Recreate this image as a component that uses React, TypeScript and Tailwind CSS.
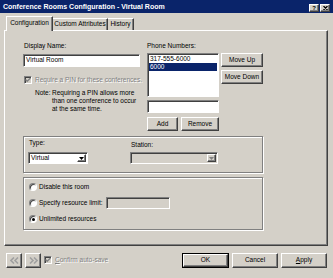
import React from 'react';

/**
 * Conference Rooms Configuration dialog (Windows classic look)
 */

const raised =
  'border border-t-white border-l-white border-b-[#404040] border-r-[#404040] shadow-[inset_-1px_-1px_0_#808080]';
const sunken =
  'border border-t-[#808080] border-l-[#808080] border-b-white border-r-white shadow-[inset_1px_1px_0_#404040]';
const etched = 'border border-[#808080] shadow-[1px_1px_0_#fff,inset_1px_1px_0_#fff]';
const disabledText = 'text-[#808080] [text-shadow:1px_1px_0_#fff]';

const Button: React.FC<{ className?: string; children: React.ReactNode }> = ({ className = '', children }) => (
  <div className={`${raised} bg-[#d4d0c8] flex items-center justify-center ${className}`}>{children}</div>
);

const Check: React.FC<{ disabled?: boolean }> = ({ disabled }) => (
  <div className={`${sunken} shrink-0 w-[8px] h-[8px] ${disabled ? 'bg-[#d4d0c8]' : 'bg-white'} flex items-center justify-center`}>
    <svg width="6" height="6" viewBox="0 0 6 6">
      <path d="M0.5 2.5 L2.2 4.3 L5.5 1" stroke={disabled ? '#808080' : '#000'} strokeWidth="1.3" fill="none" />
    </svg>
  </div>
);

const Radio: React.FC<{ checked?: boolean }> = ({ checked }) => (
  <div className="shrink-0 w-[8px] h-[8px] rounded-full bg-white border border-t-[#808080] border-l-[#808080] border-b-white border-r-white shadow-[inset_1px_1px_0_#404040] flex items-center justify-center">
    {checked && <div className="w-[3px] h-[3px] rounded-full bg-black" />}
  </div>
);

const Combo: React.FC<{ value?: string; disabled?: boolean; className?: string }> = ({ value, disabled, className = '' }) => (
  <div className={`${sunken} ${disabled ? 'bg-[#d4d0c8]' : 'bg-white'} h-[12px] flex items-stretch ${className}`}>
    <div className="flex-1 pl-[2px] flex items-center">{value}</div>
    <div className={`${raised} w-[9px] flex items-center justify-center m-px`}>
      <svg width="5" height="3" viewBox="0 0 5 3">
        <path d="M0 0 H5 L2.5 3 Z" fill={disabled ? '#808080' : '#000'} />
      </svg>
    </div>
  </div>
);

const NavButton: React.FC<{ dir: 'left' | 'right' }> = ({ dir }) => (
  <Button className="w-[16px] h-[15px]">
    <svg width="9" height="7" viewBox="0 0 9 7">
      {dir === 'left' ? (
        <path d="M4 0.5 L1 3.5 L4 6.5 M8 0.5 L5 3.5 L8 6.5" stroke="#a0a0a0" strokeWidth="1.6" fill="none" />
      ) : (
        <path d="M1 0.5 L4 3.5 L1 6.5 M5 0.5 L8 3.5 L5 6.5" stroke="#a0a0a0" strokeWidth="1.6" fill="none" />
      )}
    </svg>
  </Button>
);

export default function App() {
  return (
    <div className="w-[333px] h-[278px] bg-[#d4d0c8] overflow-hidden flex flex-col whitespace-nowrap font-['Liberation_Sans',Arial,sans-serif] text-[6.5px] leading-none text-black">
      {/* Title bar */}
      <div className="h-[13px] bg-[#0a246a] flex items-center pl-[3px] pr-[3px]">
        <span className="text-white font-bold text-[7px]">Conference Rooms Configuration - Virtual Room</span>
        <div className="ml-auto flex gap-[1px] mt-[2px]">
          <Button className="w-[10px] h-[8px] font-bold text-[6px]">?</Button>
          <Button className="w-[10px] h-[8px]">
            <svg width="5" height="4" viewBox="0 0 5 4">
              <path d="M0.5 0 L4.5 4 M4.5 0 L0.5 4" stroke="#000" strokeWidth="1.2" />
            </svg>
          </Button>
        </div>
      </div>

      {/* Tabs */}
      <div className="mt-[3px] pl-[6px] h-[14px] flex items-end">
        <div className="relative z-10 h-[15px] -mb-px w-[47px] bg-[#d4d0c8] border-t border-l border-white border-r border-r-[#404040] shadow-[inset_-1px_0_0_#808080] flex items-center justify-center pb-px">
          Configuration
        </div>
        <div className="h-[12px] w-[55px] border-t border-white border-r border-r-[#404040] shadow-[inset_-1px_0_0_#808080] flex items-center justify-center">
          Custom Attributes
        </div>
        <div className="h-[12px] w-[26px] border-t border-white border-r border-r-[#404040] shadow-[inset_-1px_0_0_#808080] flex items-center justify-center">
          History
        </div>
      </div>

      {/* Tab page */}
      <div className={`ml-[4px] w-[324px] h-[216px] ${raised} pl-[18px] pt-[11px]`}>
        <div className="flex h-[89px]">
          {/* Left column */}
          <div className="w-[117px] flex flex-col">
            <div className="h-[12px] pl-[1px] pt-[1px]">Display Name:</div>
            <div className={`${sunken} bg-white h-[13px] pl-[2px] flex items-center`}>Virtual Room</div>
            <div className="mt-[9px] h-[8px] pl-[1px] flex items-center gap-[3px]">
              <Check disabled />
              <span className={disabledText}>Require a PIN for these conferences.</span>
            </div>
            <div className="mt-[5px] pl-[12px] flex leading-[8px]">
              <span className="w-[17px]">Note:</span>
              <span>
                Requiring a PIN allows more
                <br />
                than one conference to occur
                <br />
                at the same time.
              </span>
            </div>
          </div>

          {/* Right column */}
          <div className="ml-[7px] flex flex-col">
            <div className="h-[11px] pt-[1px]">Phone Numbers:</div>
            <div className="flex">
              <div className={`${sunken} bg-white w-[72px] h-[44px] p-[1px]`}>
                <div className="h-[8px] pl-[1px] flex items-center">317-555-6000</div>
                <div className="h-[8px] pl-[1px] flex items-center bg-[#0a246a] text-white">6000</div>
              </div>
              <div className="ml-[2px] flex flex-col gap-[3px]">
                <Button className="w-[42px] h-[14px]">Move Up</Button>
                <Button className="w-[42px] h-[14px]">Move Down</Button>
              </div>
            </div>
            <div className={`${sunken} bg-white w-[72px] h-[13px] mt-[3px]`} />
            <div className="flex mt-[4px] gap-[3px]">
              <Button className="w-[31px] h-[14px]">Add</Button>
              <Button className="w-[38px] h-[14px]">Remove</Button>
            </div>
          </div>
        </div>

        {/* Type / Station group */}
        <div className={`${etched} mt-[5px] w-[240px] h-[37px] pl-[4px] pt-[3px] flex`}>
          <div className="flex flex-col w-[60px]">
            <div className="h-[12px] pl-[1px]">Type:</div>
            <Combo value="Virtual" className="w-[60px]" />
          </div>
          <div className="ml-[42px] flex flex-col w-[88px]">
            <div className="h-[12px] pl-[1px] pt-[2px]">Station:</div>
            <Combo disabled className="w-[88px]" />
          </div>
        </div>

        {/* Resource group */}
        <div className={`${etched} mt-[4px] w-[240px] h-[53px] pl-[5px] pt-[3px] flex flex-col gap-[4px]`}>
          <div className="h-[12px] flex items-center gap-[2px]">
            <Radio />
            <span>Disable this room</span>
          </div>
          <div className="h-[12px] flex items-center gap-[2px]">
            <Radio />
            <span>Specify resource limit:</span>
            <div className={`${sunken} bg-[#d4d0c8] w-[64px] h-[12px] ml-[1px]`} />
          </div>
          <div className="h-[12px] flex items-center gap-[2px]">
            <Radio checked />
            <span>Unlimited resources</span>
          </div>
        </div>
      </div>

      {/* Bottom bar */}
      <div className="flex items-center pl-[6px] pr-[6px] mt-[6px]">
        <NavButton dir="left" />
        <div className="ml-[3px]">
          <NavButton dir="right" />
        </div>
        <div className="ml-[3px] flex items-center gap-[3px]">
          <Check disabled />
          <span className={disabledText}>
            <span className="underline">C</span>onfirm auto-save
          </span>
        </div>
        <div className="ml-auto flex gap-[3px] mt-[1px]">
          <div className="border border-black">
            <Button className="w-[45px] h-[13px]">OK</Button>
          </div>
          <Button className="w-[46px] h-[15px]">Cancel</Button>
          <Button className="w-[46px] h-[15px]">
            <span>
              <span className="underline">A</span>pply
            </span>
          </Button>
        </div>
      </div>
    </div>
  );
}
